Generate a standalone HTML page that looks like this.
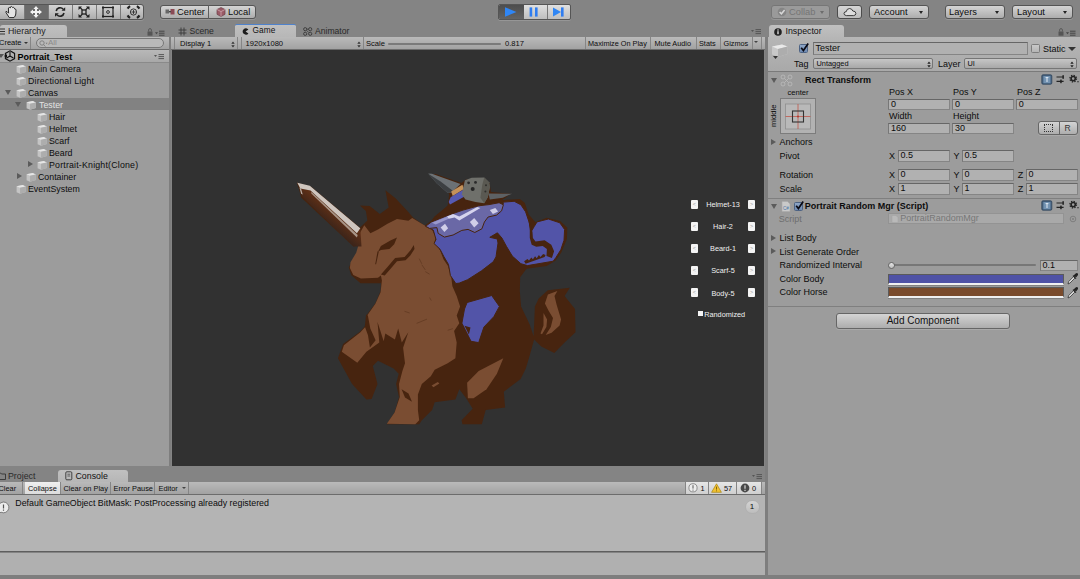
<!DOCTYPE html>
<html><head><meta charset="utf-8">
<style>
*{box-sizing:border-box;margin:0;padding:0}
html,body{width:1080px;height:579px;overflow:hidden;background:#a1a1a1;font-family:"Liberation Sans",sans-serif;font-size:9px;color:#0c0c0c}
#hier .t{font-size:8.8px}
.abs{position:absolute}
#root{position:relative;width:1080px;height:579px;overflow:hidden;background:#7e7e7e}
.t{position:absolute;white-space:nowrap;line-height:12px;height:12px}
.b{font-weight:700}
.btn{position:absolute;border:1px solid #555;border-radius:3px;background:linear-gradient(#d4d4d4,#adadad);box-shadow:0 1px 0 rgba(255,255,255,.15)}
.tab{position:absolute;height:13px;background:linear-gradient(#c0c0c0,#b6b6b6);border-radius:3px 3px 0 0}
.tbar{position:absolute;height:13px;background:linear-gradient(#bababa,#a2a2a2);border-bottom:1px solid #6c6c6c}
.fld{position:absolute;height:11px;background:#b1b1b1;border:1px solid #858585;border-top-color:#666;border-left-color:#777;font-size:9px;line-height:9.8px;padding-left:2px;white-space:nowrap;overflow:hidden}
.dd{position:absolute;height:11px;background:linear-gradient(#c6c6c6,#a8a8a8);border:1px solid #767676;border-radius:2px;font-size:7.4px;line-height:9.5px;padding-left:3px;white-space:nowrap}
.sep{position:absolute;width:1px;background:#858585}
.tri-r{position:absolute;width:0;height:0;border-left:5px solid #5b5b5b;border-top:3.5px solid transparent;border-bottom:3.5px solid transparent}
.tri-d{position:absolute;width:0;height:0;border-top:5px solid #5b5b5b;border-left:3.5px solid transparent;border-right:3.5px solid transparent}
.cube{position:absolute;width:10.5px;height:10px}
</style></head><body>
<div id="root">
<!-- TOP TOOLBAR -->
<div id="top" class="abs" style="left:0;top:0;width:1080px;height:37px;background:#848484">
<!-- tool buttons -->
<div class="btn" style="left:-3px;top:3.5px;width:147px;height:16px;overflow:hidden">
 <div class="abs" style="left:26px;top:0;width:24px;height:16px;background:#6b6b6b"></div>
 <div class="sep" style="left:26px;top:0;height:16px;background:#7a7a7a"></div>
 <div class="sep" style="left:50px;top:0;height:16px;background:#7a7a7a"></div>
 <div class="sep" style="left:74px;top:0;height:16px;background:#7a7a7a"></div>
 <div class="sep" style="left:98px;top:0;height:16px;background:#7a7a7a"></div>
 <div class="sep" style="left:122px;top:0;height:16px;background:#7a7a7a"></div>
 <svg class="abs" style="left:0;top:-0.5px" width="147" height="15" viewBox="0 0 147 15">
  <!-- hand -->
  <g fill="none" stroke="#2a2a2a" stroke-width="1" stroke-linejoin="round" stroke-linecap="round">
   <path d="M11 13.2 L8 8.6 Q7.4 7 9 7.6 L10.6 9.2 L10.4 4 Q11.3 2.8 12.2 4 L12.5 2.9 Q13.5 1.9 14.4 3.1 L14.7 3.6 Q15.7 2.9 16.4 4.1 L16.6 4.9 Q17.8 4.6 18 6.1 L17.8 10 Q17.5 12.2 16 13.6 L11.6 13.6 Z" fill="#e4e4e4"/>
  </g>
  <!-- move -->
  <g fill="#f2f2f2" stroke="none">
   <path d="M38 2 L40.6 5 L39 5 L39 7 L41 7 L41 5.4 L44 8 L41 10.6 L41 9 L39 9 L39 11 L40.6 11 L38 14 L35.4 11 L37 11 L37 9 L35 9 L35 10.6 L32 8 L35 5.4 L35 7 L37 7 L37 5 L35.4 5 Z"/>
  </g>
  <!-- rotate -->
  <g fill="none" stroke="#222" stroke-width="1.6">
   <path d="M58.2 7 A4 4 0 0 1 65.2 5.2"/>
   <path d="M66 9 A4 4 0 0 1 59 10.8"/>
  </g>
  <path d="M63.5 6.8 L67.2 6.8 L67.2 3.2 Z" fill="#222"/>
  <path d="M60.8 9.2 L57 9.2 L57 12.8 Z" fill="#222"/>
  <!-- scale -->
  <g fill="#222">
   <rect x="84" y="6" width="4" height="4" fill="none" stroke="#222" stroke-width="1.3"/>
   <path d="M80.5 2.5 L84 2.5 L83 3.6 L84.8 5.4 L83.9 6.3 L82.1 4.5 L80.5 6 Z"/>
   <path d="M91.5 2.5 L88 2.5 L89 3.6 L87.2 5.4 L88.1 6.3 L89.9 4.5 L91.5 6 Z"/>
   <path d="M80.5 13.5 L84 13.5 L83 12.4 L84.8 10.6 L83.9 9.7 L82.1 11.5 L80.5 10 Z"/>
   <path d="M91.5 13.5 L88 13.5 L89 12.4 L87.2 10.6 L88.1 9.7 L89.9 11.5 L91.5 10 Z"/>
  </g>
  <!-- rect -->
  <g>
   <rect x="105" y="3.5" width="10" height="9" fill="none" stroke="#222" stroke-width="1.2"/>
   <circle cx="110" cy="8" r="1.4" fill="none" stroke="#222" stroke-width="0.9"/>
   <rect x="104" y="2.5" width="2" height="2" fill="#222"/><rect x="114" y="2.5" width="2" height="2" fill="#222"/>
   <rect x="104" y="11.5" width="2" height="2" fill="#222"/><rect x="114" y="11.5" width="2" height="2" fill="#222"/>
  </g>
  <!-- transform -->
  <g fill="none" stroke="#222">
   <circle cx="135.5" cy="8" r="3.1" stroke-width="0.9"/>
   <path d="M135.5 6 V10 M133.5 8 H137.5" stroke-width="0.8"/>
   <path d="M129.6 4.6 A6.8 6.8 0 0 1 132.1 2.1 M138.9 2.1 A6.8 6.8 0 0 1 141.4 4.6 M141.4 11.4 A6.8 6.8 0 0 1 138.9 13.9 M132.1 13.9 A6.8 6.8 0 0 1 129.6 11.4" stroke-width="2.2"/>
  </g>
 </svg>
</div>
<!-- center/local -->
<div class="btn" style="left:160px;top:5px;width:96px;height:14px"></div>
<div class="sep" style="left:208px;top:5px;height:14px;background:#5e5e5e"></div>
<svg class="abs" style="left:165px;top:8px" width="10" height="8" viewBox="0 0 10 8"><rect x="0.5" y="1.5" width="3.5" height="4" fill="#666"/><rect x="5.5" y="1" width="4" height="5.5" fill="#8a4a55"/><rect x="4" y="3" width="2" height="1.4" fill="#444"/></svg>
<div class="t" style="left:177px;top:6px;font-size:9.3px">Center</div>
<svg class="abs" style="left:216px;top:7px" width="10" height="10" viewBox="0 0 10 10"><path d="M5 0.5 L9 2.5 L9 7.3 L5 9.5 L1 7.3 L1 2.5 Z" fill="#9a5a66" stroke="#6a3f49" stroke-width="0.7"/><path d="M1 2.5 L5 4.6 L9 2.5 M5 4.6 V9.5" stroke="#d6b0b8" stroke-width="0.7" fill="none"/></svg>
<div class="t" style="left:228px;top:6px;font-size:9.3px">Local</div>
<!-- play -->
<div class="btn" style="left:498px;top:4px;width:73px;height:16px;border-color:#555;border-radius:2px;overflow:hidden;background:linear-gradient(#e0e0e0,#bebebe)">
 <div class="abs" style="left:0;top:0;width:25px;height:16px;background:linear-gradient(#4d4d4d,#666)"></div>
 <div class="sep" style="left:48px;top:0;height:16px;background:#777"></div>
 <svg class="abs" style="left:-1px;top:-1px" width="73" height="16" viewBox="0 0 73 16">
  <path d="M7 3.2 L18.5 8 L7 12.8 Z" fill="#2f86f5"/>
  <rect x="31.6" y="3.4" width="2.6" height="9.2" fill="#2f7df0"/><rect x="37" y="3.4" width="2.6" height="9.2" fill="#2f7df0"/>
  <path d="M55 3.4 L63 8 L55 12.6 Z" fill="#2f86f5"/><rect x="63" y="3.4" width="2.6" height="9.2" fill="#2f7df0"/>
 </svg>
</div>
<!-- right buttons -->
<div class="btn" style="left:771px;top:5px;width:59px;height:14px;background:#9a9a9a;border-color:#767676"></div>
<svg class="abs" style="left:777px;top:7px" width="10" height="10" viewBox="0 0 10 10"><circle cx="5" cy="5" r="4.3" fill="#858585"/><path d="M2.6 5 L4.4 6.8 L7.6 3" stroke="#d8d8d8" stroke-width="1.5" fill="none"/></svg>
<div class="t" style="left:789px;top:6px;font-size:9.3px;color:#757575">Collab</div>
<div class="abs" style="left:820px;top:11px;width:0;height:0;border-top:3px solid #6d6d6d;border-left:2.5px solid transparent;border-right:2.5px solid transparent"></div>
<div class="btn" style="left:837px;top:5px;width:25px;height:14px;border-color:#4c4c4c;background:linear-gradient(#d5d5d5,#bdbdbd)"></div>
<svg class="abs" style="left:843px;top:7px" width="14" height="10" viewBox="0 0 14 10"><path d="M3.4 8.6 Q0.8 8.4 1 6.3 Q1.3 4.6 3.2 4.7 Q3.6 1.6 6.6 1.5 Q9 1.6 9.8 4 Q12.8 4 12.9 6.4 Q12.8 8.5 10.6 8.6 Z" fill="#ddd" stroke="#2c2c2c" stroke-width="0.9"/></svg>
<div class="btn" style="left:869px;top:5px;width:60px;height:14px"></div>
<div class="t" style="left:874px;top:6px;font-size:9.3px">Account</div>
<div class="abs" style="left:919px;top:11px;width:0;height:0;border-top:3px solid #222;border-left:2.5px solid transparent;border-right:2.5px solid transparent"></div>
<div class="btn" style="left:945px;top:5px;width:60px;height:14px"></div>
<div class="t" style="left:949px;top:6px;font-size:9.3px">Layers</div>
<div class="abs" style="left:995px;top:11px;width:0;height:0;border-top:3px solid #222;border-left:2.5px solid transparent;border-right:2.5px solid transparent"></div>
<div class="btn" style="left:1012px;top:5px;width:61px;height:14px"></div>
<div class="t" style="left:1017px;top:6px;font-size:9.3px">Layout</div>
<div class="abs" style="left:1063px;top:11px;width:0;height:0;border-top:3px solid #222;border-left:2.5px solid transparent;border-right:2.5px solid transparent"></div>
</div>
<!-- HIERARCHY -->
<div id="hier" class="abs" style="left:0;top:25px;width:169px;height:441px;background:linear-gradient(#848484 12px,#9c9c9c 12px)">
<div class="tab" style="left:0;top:0;width:67px"></div>
<svg class="abs" style="left:0;top:3px" width="6" height="7" viewBox="0 0 6 7"><path d="M0 1 H5 M0 3.5 H5 M0 6 H5" stroke="#333" stroke-width="1"/></svg><div class="t" style="left:8px;top:0px;font-size:8.8px;color:#222">Hierarchy</div>
<svg class="abs" style="left:147px;top:2px" width="20" height="10" viewBox="0 0 20 10"><rect x="0.5" y="4.5" width="5" height="4.2" fill="#555"/><path d="M1.6 4.5 V3 A1.4 1.4 0 0 1 4.4 3 V4.5" stroke="#555" stroke-width="0.9" fill="none"/><path d="M8 5.2 L11 5.2 L9.5 7.2 Z" fill="#444"/><path d="M12 4.2 H17.5 M12 6.2 H17.5 M12 8.2 H17.5" stroke="#444" stroke-width="1"/></svg>
<div class="tbar" style="left:0;top:12px;width:169px"></div>
<div class="t" style="left:-1px;top:12px;font-size:7.5px">Create</div>
<div class="abs" style="left:24px;top:17px;width:0;height:0;border-top:2.5px solid #333;border-left:2px solid transparent;border-right:2px solid transparent"></div>
<div class="sep" style="left:30px;top:12px;height:12px"></div>
<div class="abs" style="left:36px;top:13px;width:128px;height:10px;border:1px solid #777;border-radius:5px;background:#b9b9b9"></div>
<svg class="abs" style="left:39px;top:14.5px" width="9" height="8" viewBox="0 0 9 8"><circle cx="3" cy="3" r="2.2" fill="none" stroke="#7a7a7a" stroke-width="0.9"/><path d="M4.6 4.6 L6.4 6.6" stroke="#7a7a7a" stroke-width="0.9"/><path d="M6.6 2.8 L8.6 2.8 L7.6 4.2Z" fill="#7a7a7a"/></svg><div class="t" style="left:48px;top:12px;font-size:8px;color:#8a8a8a">All</div>
<div class="abs" style="left:0;top:25px;width:169px;height:13px;background:linear-gradient(#b8b8b8,#a8a8a8);border-bottom:1px solid #8a8a8a"></div>
<div class="abs" style="left:-2px;top:29px;width:0;height:0;border-top:4px solid #555;border-left:3px solid transparent;border-right:3px solid transparent"></div>
<svg class="abs" style="left:4px;top:25px" width="12" height="12" viewBox="0 0 12 12"><path d="M6 0.8 L10.6 3.4 L10.6 8.6 L6 11.2 L1.4 8.6 L1.4 3.4 Z" fill="none" stroke="#111" stroke-width="1.1"/><path d="M6 6 L6 2 M6 6 L9.4 8 M6 6 L2.6 8" stroke="#111" stroke-width="1.1"/><path d="M0 6 L3 4.2 L3 7.8Z" fill="#111"/></svg>
<div class="t b" style="left:17.5px;top:25.5px;font-size:9px;color:#000">Portrait_Test</div>
<svg class="abs" style="left:154px;top:29px" width="12" height="6" viewBox="0 0 12 6"><path d="M0 1 L3 1 L1.5 3 Z" fill="#555"/><path d="M4.5 0.6 H10 M4.5 2.6 H10 M4.5 4.6 H10" stroke="#555" stroke-width="1"/></svg>
<svg class="cube" style="left:16px;top:38.8px" viewBox="0 0 9 9"><path d="M0.3 2 L5.8 1 L8.6 2.2 L8.6 7.2 L3.4 8.8 L0.3 7.4 Z" fill="#c4c4c4"/><path d="M0.3 2 L5.8 1 L8.6 2.2 L3.4 3.4 Z" fill="#e6e6e6"/><path d="M3.4 3.4 L8.6 2.2 L8.6 7.2 L3.4 8.8 Z" fill="#adadad"/></svg>
<div class="t" style="left:28px;top:37.8px;color:#0c0c0c">Main Camera</div>
<svg class="cube" style="left:16px;top:50.8px" viewBox="0 0 9 9"><path d="M0.3 2 L5.8 1 L8.6 2.2 L8.6 7.2 L3.4 8.8 L0.3 7.4 Z" fill="#c4c4c4"/><path d="M0.3 2 L5.8 1 L8.6 2.2 L3.4 3.4 Z" fill="#e6e6e6"/><path d="M3.4 3.4 L8.6 2.2 L8.6 7.2 L3.4 8.8 Z" fill="#adadad"/></svg>
<div class="t" style="left:28px;top:49.8px;color:#0c0c0c;letter-spacing:0.18px">Directional Light</div>
<div class="tri-d" style="left:5px;top:65.1px"></div>
<svg class="cube" style="left:16px;top:62.8px" viewBox="0 0 9 9"><path d="M0.3 2 L5.8 1 L8.6 2.2 L8.6 7.2 L3.4 8.8 L0.3 7.4 Z" fill="#c4c4c4"/><path d="M0.3 2 L5.8 1 L8.6 2.2 L3.4 3.4 Z" fill="#e6e6e6"/><path d="M3.4 3.4 L8.6 2.2 L8.6 7.2 L3.4 8.8 Z" fill="#adadad"/></svg>
<div class="t" style="left:28px;top:61.8px;color:#0c0c0c">Canvas</div>
<div class="abs" style="left:0;top:73px;width:169px;height:12px;background:#828282"></div>
<div class="tri-d" style="left:15px;top:77.1px"></div>
<svg class="cube" style="left:26px;top:74.8px" viewBox="0 0 9 9"><path d="M0.3 2 L5.8 1 L8.6 2.2 L8.6 7.2 L3.4 8.8 L0.3 7.4 Z" fill="#c4c4c4"/><path d="M0.3 2 L5.8 1 L8.6 2.2 L3.4 3.4 Z" fill="#e6e6e6"/><path d="M3.4 3.4 L8.6 2.2 L8.6 7.2 L3.4 8.8 Z" fill="#adadad"/></svg>
<div class="t" style="left:39px;top:73.8px;color:#e4e4e4">Tester</div>
<svg class="cube" style="left:37px;top:86.8px" viewBox="0 0 9 9"><path d="M0.3 2 L5.8 1 L8.6 2.2 L8.6 7.2 L3.4 8.8 L0.3 7.4 Z" fill="#c4c4c4"/><path d="M0.3 2 L5.8 1 L8.6 2.2 L3.4 3.4 Z" fill="#e6e6e6"/><path d="M3.4 3.4 L8.6 2.2 L8.6 7.2 L3.4 8.8 Z" fill="#adadad"/></svg>
<div class="t" style="left:49px;top:85.8px;color:#0c0c0c">Hair</div>
<svg class="cube" style="left:37px;top:98.8px" viewBox="0 0 9 9"><path d="M0.3 2 L5.8 1 L8.6 2.2 L8.6 7.2 L3.4 8.8 L0.3 7.4 Z" fill="#c4c4c4"/><path d="M0.3 2 L5.8 1 L8.6 2.2 L3.4 3.4 Z" fill="#e6e6e6"/><path d="M3.4 3.4 L8.6 2.2 L8.6 7.2 L3.4 8.8 Z" fill="#adadad"/></svg>
<div class="t" style="left:49px;top:97.8px;color:#0c0c0c">Helmet</div>
<svg class="cube" style="left:37px;top:110.8px" viewBox="0 0 9 9"><path d="M0.3 2 L5.8 1 L8.6 2.2 L8.6 7.2 L3.4 8.8 L0.3 7.4 Z" fill="#c4c4c4"/><path d="M0.3 2 L5.8 1 L8.6 2.2 L3.4 3.4 Z" fill="#e6e6e6"/><path d="M3.4 3.4 L8.6 2.2 L8.6 7.2 L3.4 8.8 Z" fill="#adadad"/></svg>
<div class="t" style="left:49px;top:109.8px;color:#0c0c0c">Scarf</div>
<svg class="cube" style="left:37px;top:122.8px" viewBox="0 0 9 9"><path d="M0.3 2 L5.8 1 L8.6 2.2 L8.6 7.2 L3.4 8.8 L0.3 7.4 Z" fill="#c4c4c4"/><path d="M0.3 2 L5.8 1 L8.6 2.2 L3.4 3.4 Z" fill="#e6e6e6"/><path d="M3.4 3.4 L8.6 2.2 L8.6 7.2 L3.4 8.8 Z" fill="#adadad"/></svg>
<div class="t" style="left:49px;top:121.8px;color:#0c0c0c">Beard</div>
<div class="tri-r" style="left:28px;top:136.1px"></div>
<svg class="cube" style="left:37px;top:134.8px" viewBox="0 0 9 9"><path d="M0.3 2 L5.8 1 L8.6 2.2 L8.6 7.2 L3.4 8.8 L0.3 7.4 Z" fill="#c4c4c4"/><path d="M0.3 2 L5.8 1 L8.6 2.2 L3.4 3.4 Z" fill="#e6e6e6"/><path d="M3.4 3.4 L8.6 2.2 L8.6 7.2 L3.4 8.8 Z" fill="#adadad"/></svg>
<div class="t" style="left:49px;top:133.8px;color:#0c0c0c;letter-spacing:0.19px">Portrait-Knight(Clone)</div>
<div class="tri-r" style="left:17px;top:148.1px"></div>
<svg class="cube" style="left:26px;top:146.8px" viewBox="0 0 9 9"><path d="M0.3 2 L5.8 1 L8.6 2.2 L8.6 7.2 L3.4 8.8 L0.3 7.4 Z" fill="#c4c4c4"/><path d="M0.3 2 L5.8 1 L8.6 2.2 L3.4 3.4 Z" fill="#e6e6e6"/><path d="M3.4 3.4 L8.6 2.2 L8.6 7.2 L3.4 8.8 Z" fill="#adadad"/></svg>
<div class="t" style="left:38px;top:145.8px;color:#0c0c0c">Container</div>
<svg class="cube" style="left:16px;top:158.8px" viewBox="0 0 9 9"><path d="M0.3 2 L5.8 1 L8.6 2.2 L8.6 7.2 L3.4 8.8 L0.3 7.4 Z" fill="#c4c4c4"/><path d="M0.3 2 L5.8 1 L8.6 2.2 L3.4 3.4 Z" fill="#e6e6e6"/><path d="M3.4 3.4 L8.6 2.2 L8.6 7.2 L3.4 8.8 Z" fill="#adadad"/></svg>
<div class="t" style="left:28px;top:157.8px;color:#0c0c0c">EventSystem</div>
</div>
<!-- GAME -->
<div id="gamep" class="abs" style="left:171px;top:25px;width:594px;height:441px;background:#848484">
<div class="tab" style="left:64px;top:-1px;height:14px;width:61px;border-top:1.5px solid #4f82cc;border-radius:2px 2px 0 0"></div>
<svg class="abs" style="left:7px;top:2px" width="9" height="9" viewBox="0 0 9 9"><path d="M3 0.5 V8.5 M6 0.5 V8.5 M0.5 3 H8.5 M0.5 6 H8.5" stroke="#3a3a3a" stroke-width="0.9"/></svg>
<div class="t" style="left:18.5px;top:0;font-size:8.6px;color:#2a2a2a">Scene</div>
<svg class="abs" style="left:71px;top:3px" width="7" height="7" viewBox="0 0 7 7"><path d="M6.4 1.6 A3.2 3.2 0 1 0 6.4 5.4 L3.6 3.5 Z" fill="#1c1c1c"/></svg>
<div class="t" style="left:81.5px;top:-0.7px;font-size:8.3px;letter-spacing:0.1px;color:#111">Game</div>
<svg class="abs" style="left:132px;top:2px" width="10" height="9" viewBox="0 0 10 9"><circle cx="2.2" cy="2.2" r="1.6" fill="none" stroke="#3a3a3a" stroke-width="0.9"/><circle cx="7.2" cy="2.2" r="1.6" fill="none" stroke="#3a3a3a" stroke-width="0.9"/><circle cx="2.2" cy="6.8" r="1.6" fill="none" stroke="#3a3a3a" stroke-width="0.9"/><circle cx="7.2" cy="6.8" r="1.6" fill="none" stroke="#3a3a3a" stroke-width="0.9"/><path d="M3.6 3.4 L5.8 5.6 M3.8 2.2 H5.6" stroke="#3a3a3a" stroke-width="0.8"/></svg>
<div class="t" style="left:144px;top:0;font-size:8.6px;color:#2a2a2a">Animator</div>
<svg class="abs" style="left:580px;top:4px" width="12" height="6" viewBox="0 0 12 6"><path d="M0 1 L3 1 L1.5 3 Z" fill="#555"/><path d="M4.5 0.6 H10 M4.5 2.6 H10 M4.5 4.6 H10" stroke="#555" stroke-width="1"/></svg>
<div class="tbar" style="left:0;top:12px;width:594px"></div>
<div class="sep" style="left:3px;top:12px;height:12px"></div>
<div class="t" style="left:9px;top:12.6px;font-size:7.6px;">Display 1</div>
<svg class="abs" style="left:59.5px;top:15.5px" width="4" height="7" viewBox="0 0 4 7"><path d="M0.3 2.8 L2 0.6 L3.7 2.8 Z M0.3 4.2 L2 6.4 L3.7 4.2 Z" fill="#333"/></svg>
<div class="sep" style="left:65.5px;top:12px;height:12px"></div>
<div class="sep" style="left:69.5px;top:12px;height:12px"></div>
<div class="t" style="left:74.5px;top:12.6px;font-size:7.6px;">1920x1080</div>
<svg class="abs" style="left:186px;top:15.5px" width="4" height="7" viewBox="0 0 4 7"><path d="M0.3 2.8 L2 0.6 L3.7 2.8 Z M0.3 4.2 L2 6.4 L3.7 4.2 Z" fill="#333"/></svg>
<div class="sep" style="left:191.5px;top:12px;height:12px"></div>
<div class="t" style="left:195px;top:12.6px;font-size:7.6px;">Scale</div>
<div class="abs" style="left:216.5px;top:17.5px;width:113px;height:2px;background:#7a7a7a;border-radius:1px"></div>
<div class="t" style="left:334px;top:12.6px;font-size:7.6px;">0.817</div>
<div class="sep" style="left:414px;top:12px;height:12px"></div>
<div class="t" style="left:417px;top:12.6px;font-size:7.3px;">Maximize On Play</div>
<div class="sep" style="left:479px;top:12px;height:12px"></div>
<div class="t" style="left:483.5px;top:12.6px;font-size:7.3px;">Mute Audio</div>
<div class="sep" style="left:525px;top:12px;height:12px"></div>
<div class="t" style="left:528px;top:12.6px;font-size:7.3px;">Stats</div>
<div class="sep" style="left:548.5px;top:12px;height:12px"></div>
<div class="t" style="left:552.5px;top:12.6px;font-size:7.3px;">Gizmos</div>
<div class="sep" style="left:580.5px;top:12px;height:12px"></div>
<div class="sep" style="left:589.5px;top:12px;height:12px"></div>
<div class="abs" style="left:583px;top:16px;width:0;height:0;border-top:2.5px solid #444;border-left:2px solid transparent;border-right:2px solid transparent"></div>
<div id="game" class="abs" style="left:1px;top:24.5px;width:592px;height:416px;background:#313131;overflow:hidden">
<!--KNIGHT-->
<svg class="abs" style="left:0;top:0" width="592" height="416" viewBox="172 49.5 592 416">
<defs><linearGradient id="swg" gradientUnits="userSpaceOnUse" x1="334.1" y1="211.8" x2="325.3" y2="222.3"><stop offset="0" stop-color="#5e2f16"/><stop offset="1" stop-color="#3a241a"/></linearGradient></defs>
<polygon fill="#47240f" points="296.7,182 311.3,186.3 360,226.9 367.4,220.1 365.9,210.5 360,204.9 369.7,205.6 379.8,213.4 388.7,207.1 385.4,189.8 395.5,197.7 406.7,209.8 413.4,217.2 424.6,225.1 431.1,220.6 434.5,216.1 448,204.9 449.1,193.7 446.8,189.2 430,173.9 435.6,173.5 461.4,182.4 465.9,179.1 482.7,177.5 489.5,182.4 491,191.4 510.8,193.2 504.1,198.2 497.3,200.8 506.3,199.3 519.8,198.6 524.7,202.2 528.7,213.9 535.5,221.7 546.7,217.2 560.2,220.6 567.3,227.3 566.9,238.5 561.3,252 555.7,259.9 546.7,265.5 526.5,268.2 520.2,276.7 519.8,289.9 519.8,290.4 521.1,305.9 529.7,324 533.6,335.7 534.9,305.9 538.7,298.1 547.8,289.8 569.8,287.2 564.6,295.5 575,308.5 575.5,331.8 564.6,342.1 554.3,352.5 541.3,346 534.1,339 529.7,355.1 525.8,368 520.6,378.4 503.8,391.3 505.1,406.9 485.7,409.4 481.8,423.7 462.4,423.7 461.6,419.8 472.7,408.2 466.2,397.8 459.3,388.7 455.4,399.1 434.7,401.7 432.1,409.4 421.8,419.8 419.2,423.7 386.8,423.7 394.6,412 399,396.5 396.1,383.6 398.7,373.2 393.6,368 378,360.3 372.8,365.4 377.5,383.6 371.6,398.6 366.4,399.1 352.1,383.6 337.9,357.7 343.1,343.4 359.9,331.3 366.4,324 367.2,313.7 375.4,302.8 380.6,290.4 381.1,280 381.9,288.3 381.3,282.5 360.5,282.8 351.3,274.8 348.8,266.9 351.7,261 359.6,254.3 360.7,243 357.3,237.4 354,246.4 301.2,197 299,188.7"/>
<polygon fill="#7a4d32" points="364.3,224.7 370.4,232.7 378,228.9 387.5,223.2 397,218.4 408.4,220.3 412.2,217.5 425.6,225.6 430,225.1 435.6,236.3 434.5,241.9 440.1,249.8 443.5,258.7 448,265.5 451.3,276.7 452.4,285.7 456.7,295.5 460.1,305.9 456.7,315 459.3,322.7 454.1,330.5 456.7,342.1 455.4,357.7 447.7,362.8 434.7,369.3 430.8,375.8 421.8,383.6 417.9,393.9 417.9,409.4 419.2,419.8 415.3,423.7 386.8,423.2 394.6,412 399.8,396.5 399,383.6 402.4,370.6 405,362.8 403.1,347.3 408.3,331.8 401.8,342.1 398.2,327.9 394.9,339 385.3,333.1 383.7,340.8 377.5,321.4 379.3,342.1 366.4,351.2 357.3,362.3 341.8,351.2 343.9,344.7 360.4,331.8 366.4,325.3 367.7,314.2 375.4,303.3 380.6,291.7 381.9,280 380.9,275.1 378,277.3 360.9,277.9 353.3,274.5 349.9,267.5 350.5,261.7 356.2,252.2 359,242.7 360,232.3"/>
<polygon fill="#7a4d32" points="467.1,382.3 478.7,370.6 503.3,357.7 496.9,373.2 486.5,388.7 473.6,397.8 467.9,397.8"/>
<polygon fill="#7a4d32" points="547.9,294.1 557.4,290.4 554.5,295.5 556.7,304.4 561.1,319 559.6,324.9 551.6,332.2 545.7,334.4 550.8,326.4 553,317.6 548.6,310.2 544.9,302.9"/>
<polygon fill="#7a4d32" points="543.5,312.4 547.1,319 546.4,326.4 542,333.7 540.5,333 543.5,324.9"/>
<polygon fill="#7a4d32" points="431.6,384.9 437.8,381.5 439.4,383 433.4,386.7"/>
<polygon fill="#47240f" points="380.9,274.1 387.5,266.5 395.1,257.6 404.6,256.6 410.7,249.4 413.8,244.6 414.5,248.4 410.3,255.1 405.6,259.8 397,260.8 390.4,268.4 384.7,275.1"/>
<polygon fill="#47240f" points="378,251.3 380.9,245.6 390.4,239.9 397,237 394.2,243.7 389.4,248.4 380.9,249.4"/>
<polygon fill="#47240f" points="377.6,250.7 378.8,251.1 376.1,263.7 375.2,263.7"/>
<polygon fill="#47240f" points="401.6,388.7 408.5,393 412,401.2 405,397"/>
<polygon fill="#47240f" points="366.1,313.8 368,315.7 370.3,328 375.6,339.8 369.9,347 368,334.7 364.8,326.1"/>
<polygon fill="#5254a8" stroke="#47240f" stroke-width="1" stroke-linejoin="round" points="433.3,229.6 436,239 434,243 440,248.7 443.8,256 448.5,264 450.4,275 455.8,283 459.3,282.6 467.6,279.2 481.5,270.3 493.2,261.3 496,256.4 498,242.6 497.3,238.5 489.8,236.8 497.4,232.3 501.9,237.5 506.6,246.1 512.3,255.6 520.9,263.2 527.5,265.1 553.2,260.7 556,256.9 560.8,249.3 564,239.8 564.6,229 559.8,222.3 548.4,218.5 537,221.4 534.2,226.1 531.3,230.9 529,221.4 525.6,211.3 520.9,204.3 514.2,200.8 500.9,201.8 475.1,205.9 448.5,213.5 431.4,222 425.7,225.8"/>
<polygon fill="#47240f" points="528.7,220.4 530.6,223.3 532.5,231.8 532.9,237.5 535.5,241 544.6,239.8 551.3,244.2 554.1,250.8 551.9,257.5 546.5,255.6 546.9,248.6 542.7,245.5 536.3,246.3 531.7,244.2 529.8,237.5 529.8,229.9"/>
<polygon fill="#47240f" points="524.1,260.7 527.5,258.4 529,260 531.3,256.9 532.9,258.8 535.1,255.8 536.7,257.7 538.9,254.6 540.5,256.5 543.1,253.5 545.6,254.6 544.6,256.5 525.6,263.2"/>
<polygon fill="#5254a8" stroke="#47240f" stroke-width="1" stroke-linejoin="round" points="467.1,302 491.7,295 499.4,305.9 493.8,316.2 483.9,326.6 478.7,342.1 471,340.8 461.9,322.7 464.5,308.5"/>
<polygon fill="#47240f" points="464.5,325.3 470.5,327.1 468.9,333.9"/>
<polygon fill="#47240f" points="447.5,205.3 450,196.6 465.5,199.7 475.5,204.1 484.2,204.1 491.6,200.6 502.8,198.8 504,204.1 477.9,206.5 463,209.6 446.9,215.9 436.9,220.2 434.4,217.7"/>
<polygon fill="#6a68a6" stroke="#47240f" stroke-width="1" stroke-linejoin="round" points="425.7,225.8 431.3,221.5 446.9,215.2 463,209.6 478.6,205.3 489.1,204.1 499.1,202.2 503.4,204.3 501.6,210.3 496.6,214.6 488.1,216.5 484.4,221.5 481.9,228.3 474.8,232 468,228.9 461.8,229.9 453.1,234.5 444.4,236.6 438.2,232.9 436.9,227.1 429.5,227.9"/>
<polygon fill="#9a98cc" points="431.9,222.2 446.9,216.2 448.7,218.3 435.7,223.9"/>
<polygon fill="#d6d4ee" points="446.9,215.9 453.1,213.4 459.3,215.9 477.3,206.5 480.4,207.5 459.3,220 454.6,217.1 448.7,218.3"/>
<polygon fill="#d0cee8" points="440.6,227.1 445,223.3 448.1,227.7 444.4,231.6"/>
<polygon fill="#d0cee8" points="469.9,221.5 474.2,217.5 478.6,222.7 474.2,227.1"/>
<polygon fill="#d0cee8" points="489.8,209.6 495.3,207.5 498.1,210.9 492.9,213.4"/>
<polygon fill="#6c7175" points="428.2,173 431.9,173.2 460.5,183.5 451.2,192.2 447.5,192.2 436.9,182.9"/>
<polygon fill="#3c3f42" points="428.2,173.2 436.9,182.9 447.5,192.2 451.2,192.2 453.1,190.4 440.6,181.1"/>
<polygon fill="#5d6164" points="488.5,192.9 512,193.2 502.8,197.2 489.8,199.1"/>
<polygon fill="#c4925a" points="451.2,191 462.4,184.2 464,188.5 452.7,195.6"/>
<polygon fill="#565ab2" points="450.6,196.8 462.8,189.4 464.5,196 450,204.1 448.7,201.6"/>
<polygon fill="#6f706b" points="464.9,179.8 471.7,177.3 484.2,177 489.1,181.7 489.8,186.6 487.9,196.6 484.2,202.8 475.5,201.6 465.5,199.1 461.8,194.1 463.6,185.4"/>
<polygon fill="#5a5952" points="484.2,177 489.1,181.7 489.8,186.6 487.9,196.6 484.2,202.8 480.4,197.2 482.3,184.2"/>
<polygon fill="url(#swg)" points="300.3,187.9 310.5,190.1 356.9,232.7 360.3,227.8 361.5,246 353.9,246 302.2,195.9"/>
<polygon fill="#cfc6bf" points="297.3,182.2 309.8,185.2 360.3,227.8 356.9,232.7 310.5,190.1 300.3,187.9"/>
<polygon fill="#b9aca3" points="299.4,187 301,187.9 302.8,194.3 301,192.8"/>
<polygon fill="#a89486" points="311.3,191.3 357.7,234.6 356.9,236.9 311.3,193.1"/>
<line x1="419.2" y1="258.1" x2="421.8" y2="263.3" stroke="#47240f" stroke-opacity="0.55" stroke-width="0.7"/>
<line x1="421.8" y1="264.2" x2="425.3" y2="269.4" stroke="#47240f" stroke-opacity="0.55" stroke-width="0.7"/>
<line x1="425.3" y1="271.1" x2="429.6" y2="273.7" stroke="#47240f" stroke-opacity="0.55" stroke-width="0.7"/>
<line x1="404.5" y1="310.8" x2="409.7" y2="312.5" stroke="#47240f" stroke-opacity="0.55" stroke-width="0.7"/>
<line x1="416.6" y1="322.9" x2="427" y2="318.6" stroke="#47240f" stroke-opacity="0.55" stroke-width="0.7"/>
<line x1="447.7" y1="329.8" x2="452.9" y2="328.1" stroke="#47240f" stroke-opacity="0.55" stroke-width="0.7"/>
<line x1="429.6" y1="297" x2="431.3" y2="300.1" stroke="#47240f" stroke-opacity="0.55" stroke-width="0.7"/>
<circle fill="#2a2a2a" cx="468.6" cy="182.3" r="1.4"/>
<circle fill="#2a2a2a" cx="475.5" cy="181.9" r="1.4"/>
<circle fill="#262626" cx="472.7" cy="188.5" r="2"/>
<circle fill="#302f2c" cx="486" cy="184.8" r="1"/>
<circle fill="#302f2c" cx="485.4" cy="191" r="1"/>
</svg>
<!--GUI-->
<div class="abs" style="left:518.8px;top:150.4px;width:7.2px;height:8.8px;background:#f4f4f4;border-radius:1px;color:#9a9a9a;font-size:5.5px;line-height:8.8px;text-align:center">&lt;</div>
<div class="abs" style="left:576.1px;top:150.4px;width:7.2px;height:8.8px;background:#f4f4f4;border-radius:1px;color:#9a9a9a;font-size:5.5px;line-height:8.8px;text-align:center">&gt;</div>
<div class="t" style="left:521px;top:149.6px;width:60px;text-align:center;font-size:7.3px;color:#f0f0f0">Helmet-13</div>
<div class="abs" style="left:518.8px;top:172.5px;width:7.2px;height:8.8px;background:#f4f4f4;border-radius:1px;color:#9a9a9a;font-size:5.5px;line-height:8.8px;text-align:center">&lt;</div>
<div class="abs" style="left:576.1px;top:172.5px;width:7.2px;height:8.8px;background:#f4f4f4;border-radius:1px;color:#9a9a9a;font-size:5.5px;line-height:8.8px;text-align:center">&gt;</div>
<div class="t" style="left:521px;top:171.7px;width:60px;text-align:center;font-size:7.3px;color:#f0f0f0">Hair-2</div>
<div class="abs" style="left:518.8px;top:194.6px;width:7.2px;height:8.8px;background:#f4f4f4;border-radius:1px;color:#9a9a9a;font-size:5.5px;line-height:8.8px;text-align:center">&lt;</div>
<div class="abs" style="left:576.1px;top:194.6px;width:7.2px;height:8.8px;background:#f4f4f4;border-radius:1px;color:#9a9a9a;font-size:5.5px;line-height:8.8px;text-align:center">&gt;</div>
<div class="t" style="left:521px;top:193.8px;width:60px;text-align:center;font-size:7.3px;color:#f0f0f0">Beard-1</div>
<div class="abs" style="left:518.8px;top:216.7px;width:7.2px;height:8.8px;background:#f4f4f4;border-radius:1px;color:#9a9a9a;font-size:5.5px;line-height:8.8px;text-align:center">&lt;</div>
<div class="abs" style="left:576.1px;top:216.7px;width:7.2px;height:8.8px;background:#f4f4f4;border-radius:1px;color:#9a9a9a;font-size:5.5px;line-height:8.8px;text-align:center">&gt;</div>
<div class="t" style="left:521px;top:215.9px;width:60px;text-align:center;font-size:7.3px;color:#f0f0f0">Scarf-5</div>
<div class="abs" style="left:518.8px;top:238.8px;width:7.2px;height:8.8px;background:#f4f4f4;border-radius:1px;color:#9a9a9a;font-size:5.5px;line-height:8.8px;text-align:center">&lt;</div>
<div class="abs" style="left:576.1px;top:238.8px;width:7.2px;height:8.8px;background:#f4f4f4;border-radius:1px;color:#9a9a9a;font-size:5.5px;line-height:8.8px;text-align:center">&gt;</div>
<div class="t" style="left:521px;top:238px;width:60px;text-align:center;font-size:7.3px;color:#f0f0f0">Body-5</div>
<div class="abs" style="left:526px;top:261.8px;width:5px;height:5px;background:#f4f4f4"></div>
<div class="t" style="left:532.2px;top:259.3px;font-size:7.3px;color:#f0f0f0">Randomized</div>
</div>
</div>
<!-- INSPECTOR -->
<div id="insp" class="abs" style="left:768px;top:25px;width:312px;height:549.5px;background:linear-gradient(#848484 12px,#9c9c9c 12px)">
<div class="tab" style="left:1px;top:0;width:75px"></div>
<svg class="abs" style="left:6px;top:2.5px" width="8" height="8" viewBox="0 0 8 8"><circle cx="4" cy="4" r="3.8" fill="#222"/><rect x="3.3" y="3.2" width="1.4" height="3" fill="#ddd"/><rect x="3.3" y="1.4" width="1.4" height="1.2" fill="#ddd"/></svg>
<div class="t" style="left:17.5px;top:0px;font-size:8.8px;color:#111">Inspector</div>
<svg class="abs" style="left:290px;top:2px" width="20" height="10" viewBox="0 0 20 10"><rect x="0.5" y="4.5" width="5" height="4.2" fill="#555"/><path d="M1.6 4.5 V3 A1.4 1.4 0 0 1 4.4 3 V4.5" stroke="#555" stroke-width="0.9" fill="none"/><path d="M8 5.2 L11 5.2 L9.5 7.2 Z" fill="#444"/><path d="M12 4.2 H17.5 M12 6.2 H17.5 M12 8.2 H17.5" stroke="#444" stroke-width="1"/></svg>
<div class="abs" style="left:0;top:12px;width:312px;height:35px;background:linear-gradient(#b6b6b6,#a9a9a9);border-bottom:1px solid #7a7a7a"></div>
<svg class="abs" style="left:3px;top:18px" width="18" height="18" viewBox="0 0 18 18"><path d="M1 3.5 L11 1.5 L16.5 3.5 L16.5 11 L7 14 L1 11.5 Z" fill="#c8c8c8"/><path d="M1 3.5 L11 1.5 L16.5 3.5 L7 6 Z" fill="#e9e9e9"/><path d="M7 6 L16.5 3.5 L16.5 11 L7 14 Z" fill="#adadad"/><path d="M2 13 L7 13 L4.5 16 Z" fill="#333"/></svg>
<div class="abs" style="left:31px;top:18.5px;width:9px;height:9px;background:linear-gradient(#8ea6c6,#6f8bb3);border:1px solid #4d6384;border-radius:1.5px"></div>
<svg class="abs" style="left:31px;top:16.5px" width="11" height="11" viewBox="0 0 11 11"><path d="M2.2 5.8 L4.4 8.6 L9.2 1.6" stroke="#0a0a14" stroke-width="1.7" fill="none"/></svg>
<div class="fld" style="left:44.5px;top:17px;width:215px;height:12.7px;line-height:11px;font-size:9px">Tester</div>
<div class="abs" style="left:263px;top:19px;width:9px;height:9px;background:linear-gradient(#c9c9c9,#b5b5b5);border:1px solid #7d7d7d;border-radius:1.5px"></div>
<div class="t" style="left:275px;top:17.5px;font-size:9px">Static</div>
<div class="abs" style="left:300px;top:21.5px;width:0;height:0;border-top:4px solid #333;border-left:4px solid transparent;border-right:4px solid transparent"></div>
<div class="t" style="left:26px;top:32.5px;font-size:9px">Tag</div>
<div class="dd" style="left:44.5px;top:33px;width:120px">Untagged</div>
<svg class="abs" style="left:158.5px;top:35.5px" width="4" height="7" viewBox="0 0 4 7"><path d="M0.3 2.8 L2 0.6 L3.7 2.8 Z M0.3 4.2 L2 6.4 L3.7 4.2 Z" fill="#222"/></svg>
<div class="t" style="left:170px;top:32.5px;font-size:9px">Layer</div>
<div class="dd" style="left:195.5px;top:33px;width:113px">UI</div>
<svg class="abs" style="left:302px;top:35.5px" width="4" height="7" viewBox="0 0 4 7"><path d="M0.3 2.8 L2 0.6 L3.7 2.8 Z M0.3 4.2 L2 6.4 L3.7 4.2 Z" fill="#222"/></svg>
<div class="tri-d" style="left:3px;top:52.5px"></div>
<svg class="abs" style="left:12px;top:48.5px" width="13" height="13" viewBox="0 0 13 13"><g fill="none" stroke="#b9b9b9" stroke-width="0.9"><circle cx="3" cy="3" r="2"/><circle cx="10" cy="3" r="2"/><circle cx="3" cy="10" r="2"/><circle cx="10" cy="10" r="2"/><path d="M4.5 4.5 L8.5 8.5 M8.5 4.5 L4.5 8.5"/></g></svg>
<div class="t b" style="left:37px;top:49px;font-size:9px">Rect Transform</div>
<svg class="abs" style="left:272.5px;top:49px" width="12" height="11" viewBox="0 0 12 11"><rect x="0.8" y="0.8" width="10" height="9.4" rx="1.2" fill="#46627f" stroke="#30455c" stroke-width="0.8"/><rect x="2.4" y="2" width="7" height="7.2" fill="#7292b1"/><path d="M4.6 3.6 H7.4 M6 3.6 V8" stroke="#dfe8f2" stroke-width="1"/></svg>
<svg class="abs" style="left:288px;top:49px" width="9" height="11" viewBox="0 0 9 11"><path d="M0.5 3 H7 M0.5 7.4 H7.6" stroke="#222" stroke-width="1.1"/><rect x="6.4" y="1.2" width="1.5" height="3.6" fill="#222"/><rect x="4.2" y="5.6" width="1.5" height="3.6" fill="#222"/></svg>
<svg class="abs" style="left:300px;top:49px" width="12" height="11" viewBox="0 0 12 11"><circle cx="5.2" cy="4.6" r="2.1" fill="none" stroke="#222" stroke-width="1.6"/><circle cx="5.2" cy="4.6" r="3.3" fill="none" stroke="#222" stroke-width="1.3" stroke-dasharray="1.3 1.29"/><path d="M9 7.2 L11 7.2 L10 8.8 Z" fill="#222"/></svg>
<div class="t" style="left:19.5px;top:61.5px;font-size:7.6px">center</div>
<div class="t" style="left:6px;top:91px;font-size:7.6px;transform:rotate(-90deg);transform-origin:0 0;width:0;overflow:visible"><span style="position:absolute;left:-11px;top:-6px">middle</span></div>
<div class="abs" style="left:11.5px;top:72.5px;width:36px;height:36.5px;background:#b2b2b2;border:1px solid #7c7c7c"></div>
<svg class="abs" style="left:11.5px;top:72.5px" width="36" height="37" viewBox="0 0 36 37"><rect x="5.5" y="6" width="25" height="25" fill="#b9b9b9" stroke="#8e8e8e" stroke-width="0.8"/><path d="M18 6 V31 M5.5 18.5 H30.5" stroke="#c0564a" stroke-width="0.8"/><rect x="12.5" y="13" width="11" height="11" fill="none" stroke="#333" stroke-width="1.1"/><circle cx="18" cy="18.5" r="1" fill="#b03a2e"/></svg>
<div class="t" style="left:121px;top:61.3px;font-size:9px;color:#0c0c0c">Pos X</div>
<div class="t" style="left:185px;top:61.3px;font-size:9px;color:#0c0c0c">Pos Y</div>
<div class="t" style="left:249px;top:61.3px;font-size:9px;color:#0c0c0c">Pos Z</div>
<div class="fld" style="left:120px;top:73.5px;width:61.5px;height:11.5px;color:#0c0c0c">0</div>
<div class="fld" style="left:184px;top:73.5px;width:61.5px;height:11.5px;color:#0c0c0c">0</div>
<div class="fld" style="left:247.8px;top:73.5px;width:61.8px;height:11.5px;color:#0c0c0c">0</div>
<div class="t" style="left:121px;top:85.3px;font-size:9px;color:#0c0c0c">Width</div>
<div class="t" style="left:185px;top:85.3px;font-size:9px;color:#0c0c0c">Height</div>
<div class="fld" style="left:120px;top:97.7px;width:61.5px;height:11.5px;color:#0c0c0c">160</div>
<div class="fld" style="left:184px;top:97.7px;width:61.5px;height:11.5px;color:#0c0c0c">30</div>
<div class="btn" style="left:270.3px;top:96px;width:39.5px;height:13.5px;border-color:#666"></div><div class="sep" style="left:290.5px;top:96px;height:13.5px;background:#666"></div>
<div class="abs" style="left:276px;top:99px;width:9px;height:8px;border:1px dotted #333"></div>
<div class="t" style="left:296.5px;top:97px;font-size:8.5px;color:#333">R</div>
<div class="tri-r" style="left:3px;top:113.5px"></div>
<div class="t" style="left:11.5px;top:111px;font-size:9px;color:#0c0c0c">Anchors</div>
<div class="t" style="left:11.5px;top:124.5px;font-size:9px;color:#0c0c0c">Pivot</div>
<div class="t" style="left:121px;top:124.5px;font-size:9px;color:#0c0c0c">X</div>
<div class="fld" style="left:129.5px;top:125px;width:52px;height:11.5px;color:#0c0c0c">0.5</div>
<div class="t" style="left:185.5px;top:124.5px;font-size:9px;color:#0c0c0c">Y</div>
<div class="fld" style="left:193.5px;top:125px;width:52px;height:11.5px;color:#0c0c0c">0.5</div>
<div class="t" style="left:11.5px;top:144px;font-size:9px;color:#0c0c0c">Rotation</div>
<div class="t" style="left:121px;top:144px;font-size:9px;color:#0c0c0c">X</div>
<div class="fld" style="left:129.5px;top:144.4px;width:52px;height:11.5px;color:#0c0c0c">0</div>
<div class="t" style="left:185.5px;top:144px;font-size:9px;color:#0c0c0c">Y</div>
<div class="fld" style="left:193.5px;top:144.4px;width:52px;height:11.5px;color:#0c0c0c">0</div>
<div class="t" style="left:249.8px;top:144px;font-size:9px;color:#0c0c0c">Z</div>
<div class="fld" style="left:257.6px;top:144.4px;width:52px;height:11.5px;color:#0c0c0c">0</div>
<div class="t" style="left:11.5px;top:157.8px;font-size:9px;color:#0c0c0c">Scale</div>
<div class="t" style="left:121px;top:157.8px;font-size:9px;color:#0c0c0c">X</div>
<div class="fld" style="left:129.5px;top:158.2px;width:52px;height:11.5px;color:#0c0c0c">1</div>
<div class="t" style="left:185.5px;top:157.8px;font-size:9px;color:#0c0c0c">Y</div>
<div class="fld" style="left:193.5px;top:158.2px;width:52px;height:11.5px;color:#0c0c0c">1</div>
<div class="t" style="left:249.8px;top:157.8px;font-size:9px;color:#0c0c0c">Z</div>
<div class="fld" style="left:257.6px;top:158.2px;width:52px;height:11.5px;color:#0c0c0c">1</div>
<div class="abs" style="left:0;top:173px;width:312px;height:1px;background:#7f7f7f"></div>
<div class="tri-d" style="left:3px;top:179px"></div>
<svg class="abs" style="left:13px;top:175.5px" width="10" height="11" viewBox="0 0 10 11"><path d="M1 0.5 H6.5 L9 3 V10.5 H1 Z" fill="#c9c9c9" stroke="#aaa" stroke-width="0.6"/><text x="2" y="8.6" font-size="4.6" font-family="Liberation Sans" fill="#4b78a8">C#</text></svg>
<div class="abs" style="left:25.7px;top:176.5px;width:9px;height:9px;background:linear-gradient(#8ea6c6,#6f8bb3);border:1px solid #4d6384;border-radius:1.5px"></div>
<svg class="abs" style="left:25.7px;top:174.5px" width="11" height="11" viewBox="0 0 11 11"><path d="M2.2 5.8 L4.4 8.6 L9.2 1.6" stroke="#0a0a14" stroke-width="1.7" fill="none"/></svg>
<div class="t b" style="left:36.7px;top:175px;font-size:9px">Portrait Random Mgr (Script)</div>
<svg class="abs" style="left:272.5px;top:175px" width="12" height="11" viewBox="0 0 12 11"><rect x="0.8" y="0.8" width="10" height="9.4" rx="1.2" fill="#46627f" stroke="#30455c" stroke-width="0.8"/><rect x="2.4" y="2" width="7" height="7.2" fill="#7292b1"/><path d="M4.6 3.6 H7.4 M6 3.6 V8" stroke="#dfe8f2" stroke-width="1"/></svg>
<svg class="abs" style="left:288px;top:175px" width="9" height="11" viewBox="0 0 9 11"><path d="M0.5 3 H7 M0.5 7.4 H7.6" stroke="#222" stroke-width="1.1"/><rect x="6.4" y="1.2" width="1.5" height="3.6" fill="#222"/><rect x="4.2" y="5.6" width="1.5" height="3.6" fill="#222"/></svg>
<svg class="abs" style="left:300px;top:175px" width="12" height="11" viewBox="0 0 12 11"><circle cx="5.2" cy="4.6" r="2.1" fill="none" stroke="#222" stroke-width="1.6"/><circle cx="5.2" cy="4.6" r="3.3" fill="none" stroke="#222" stroke-width="1.3" stroke-dasharray="1.3 1.29"/><path d="M9 7.2 L11 7.2 L10 8.8 Z" fill="#222"/></svg>
<div class="t" style="left:10.8px;top:187.5px;font-size:9px;color:#6e6e6e">Script</div>
<div class="fld" style="left:120.3px;top:188px;width:175.5px;height:11px;color:#777;background:#a9a9a9;border-color:#939393;padding-left:11px">PortraitRandomMgr</div>
<svg class="abs" style="left:123px;top:189.5px" width="8" height="8" viewBox="0 0 8 8"><path d="M1 0.5 H5 L7 2.5 V7.5 H1 Z" fill="#b9b9b9" stroke="#a2a2a2" stroke-width="0.5"/></svg>
<svg class="abs" style="left:300.5px;top:189.5px" width="8" height="8" viewBox="0 0 8 8"><circle cx="4" cy="4" r="2.8" fill="none" stroke="#7a7a7a" stroke-width="0.9"/><circle cx="4" cy="4" r="0.9" fill="#7a7a7a"/></svg>
<div class="tri-r" style="left:3px;top:209.5px"></div>
<div class="t" style="left:11.5px;top:207px;font-size:9px;color:#0c0c0c">List Body</div>
<div class="tri-r" style="left:3px;top:223px"></div>
<div class="t" style="left:11.5px;top:220.5px;font-size:9px;color:#0c0c0c">List Generate Order</div>
<div class="t" style="left:11.5px;top:234px;font-size:9px;color:#0c0c0c">Randomized Interval</div>
<div class="abs" style="left:121px;top:239px;width:147px;height:2px;background:#777;border-radius:1px"></div>
<div class="abs" style="left:120.3px;top:236.8px;width:7px;height:7px;border-radius:50%;background:linear-gradient(#e6e6e6,#bdbdbd);border:1px solid #666"></div>
<div class="fld" style="left:271.6px;top:234.7px;width:38px;height:11px;color:#0c0c0c">0.1</div>
<div class="t" style="left:11.5px;top:247.8px;font-size:9px;color:#0c0c0c">Color Body</div>
<div class="abs" style="left:120.3px;top:248.5px;width:175.5px;height:11px;background:#4f52a6;border:1px solid #5a5a5a;border-bottom:2.4px solid #f0f0f0;box-shadow:0 0.5px 0 #666"></div>
<div class="t" style="left:11.5px;top:261.3px;font-size:9px;color:#0c0c0c">Color Horse</div>
<div class="abs" style="left:120.3px;top:262.3px;width:175.5px;height:11px;background:#7a4b2c;border:1px solid #5a5a5a;border-bottom:2.4px solid #f0f0f0;box-shadow:0 0.5px 0 #666"></div>
<svg class="abs" style="left:299px;top:248px" width="11" height="12" viewBox="0 0 11 12"><path d="M1 11 L1.6 8.6 L6.6 3.6 L8 5 L3 10 Z" fill="#ddd" stroke="#222" stroke-width="0.7"/><path d="M6 2.6 L9 5.6 M7 3 L9 1 Q10.4 0.2 10.6 1.6 L8.8 4" stroke="#222" stroke-width="1.2" fill="#222"/></svg>
<svg class="abs" style="left:299px;top:261.8px" width="11" height="12" viewBox="0 0 11 12"><path d="M1 11 L1.6 8.6 L6.6 3.6 L8 5 L3 10 Z" fill="#ddd" stroke="#222" stroke-width="0.7"/><path d="M6 2.6 L9 5.6 M7 3 L9 1 Q10.4 0.2 10.6 1.6 L8.8 4" stroke="#222" stroke-width="1.2" fill="#222"/></svg>
<div class="abs" style="left:0;top:281px;width:312px;height:1px;background:#7f7f7f"></div>
<div class="btn" style="left:67.8px;top:288.4px;width:174px;height:16px;border-color:#666;text-align:center;font-size:10px;line-height:14px;color:#111">Add Component</div>
</div>
<!-- CONSOLE -->
<div id="cons" class="abs" style="left:0;top:466px;width:765px;height:108.5px;background:#848484"><div class="abs" style="left:0;top:3px;width:765px;height:105px">
<div class="tab" style="left:58px;top:0.5px;width:70px;height:12.5px"></div>
<svg class="abs" style="left:-3px;top:3px" width="9" height="8" viewBox="0 0 9 8"><path d="M0.5 1 H3.5 L4.5 2 H8.5 V7.5 H0.5 Z" fill="none" stroke="#333" stroke-width="0.9"/></svg>
<div class="t" style="left:8px;top:1px;font-size:8.8px;color:#2a2a2a">Project</div>
<svg class="abs" style="left:65px;top:2px" width="8" height="10" viewBox="0 0 8 10"><rect x="0.8" y="0.8" width="6" height="8" rx="1" fill="none" stroke="#333" stroke-width="0.9"/><path d="M2.4 3.2 H5.2 M2.4 5 H5.2" stroke="#333" stroke-width="0.7"/></svg>
<div class="t" style="left:75.5px;top:1px;font-size:8.8px;color:#111">Console</div>
<svg class="abs" style="left:752px;top:5px" width="12" height="6" viewBox="0 0 12 6"><path d="M0 1 L3 1 L1.5 3 Z" fill="#555"/><path d="M4.5 0.6 H10 M4.5 2.6 H10 M4.5 4.6 H10" stroke="#555" stroke-width="1"/></svg>
<div class="tbar" style="left:0;top:13px;width:765px;height:13px"></div>
<div class="abs" style="left:24.5px;top:13px;width:35.5px;height:12px;background:linear-gradient(#efefef,#dcdcdc)"></div>
<div class="t" style="left:-1.5px;top:14px;font-size:7.4px">Clear</div>
<div class="sep" style="left:21.5px;top:13px;height:12px"></div>
<div class="t" style="left:28px;top:14px;font-size:7.4px">Collapse</div>
<div class="sep" style="left:60px;top:13px;height:12px"></div>
<div class="t" style="left:63.5px;top:14px;font-size:7.4px">Clear on Play</div>
<div class="sep" style="left:110px;top:13px;height:12px"></div>
<div class="t" style="left:113.5px;top:14px;font-size:7.4px">Error Pause</div>
<div class="sep" style="left:154px;top:13px;height:12px"></div>
<div class="t" style="left:158.5px;top:14px;font-size:7.4px">Editor</div>
<div class="sep" style="left:188px;top:13px;height:12px"></div>
<div class="abs" style="left:181.5px;top:18px;width:0;height:0;border-top:2.5px solid #444;border-left:2px solid transparent;border-right:2px solid transparent"></div>
<div class="abs" style="left:684.5px;top:13px;width:77px;height:12px;background:linear-gradient(#e6e6e6,#cfcfcf)"></div>
<div class="sep" style="left:684.5px;top:13px;height:12px"></div>
<div class="sep" style="left:708px;top:13px;height:12px"></div>
<div class="sep" style="left:735.5px;top:13px;height:12px"></div>
<div class="sep" style="left:761px;top:13px;height:12px"></div>
<svg class="abs" style="left:688px;top:14px" width="10" height="10" viewBox="0 0 10 10"><circle cx="5" cy="4.8" r="4.1" fill="#ececec" stroke="#777" stroke-width="0.8"/><path d="M5 2.2 V5.6 M5 6.6 V7.6" stroke="#555" stroke-width="1"/></svg>
<div class="t" style="left:700.5px;top:14px;font-size:7.4px">1</div>
<svg class="abs" style="left:711px;top:14px" width="11" height="10" viewBox="0 0 11 10"><path d="M5.5 0.8 L10.4 9.3 L0.6 9.3 Z" fill="#f1c232" stroke="#a88410" stroke-width="0.7"/><path d="M5.5 3.6 V6.6 M5.5 7.4 V8.3" stroke="#7a5a00" stroke-width="0.9"/></svg>
<div class="t" style="left:724px;top:14px;font-size:7.4px">57</div>
<svg class="abs" style="left:739.5px;top:14px" width="10" height="10" viewBox="0 0 10 10"><circle cx="5" cy="5" r="4.4" fill="#4a4a4a"/><path d="M5 2.2 V5.8 M5 6.8 V7.9" stroke="#cfcfcf" stroke-width="1.3"/></svg>
<div class="t" style="left:752px;top:14px;font-size:7.4px">0</div>
<div class="abs" style="left:0;top:26px;width:765px;height:57px;background:#b4b4b4;border-bottom:1.2px solid #5e5e5e"></div>
<div class="abs" style="left:0;top:84px;width:765px;height:21.5px;background:#b0b0b0"></div>
<svg class="abs" style="left:-3px;top:31.5px" width="13" height="14" viewBox="0 0 13 14"><path d="M6.5 1 A5.4 5.4 0 1 1 4 11.2 L1.6 12.6 L2.6 10 A5.4 5.4 0 0 1 6.5 1 Z" fill="#ededed" stroke="#666" stroke-width="0.8"/><path d="M6.5 3.4 V7.4 M6.5 8.6 V9.8" stroke="#555" stroke-width="1.2"/></svg>
<div class="t" style="left:15.3px;top:27.5px;font-size:8.85px">Default GameObject BitMask: PostProcessing already registered</div>
<div class="abs" style="left:744.5px;top:30.5px;width:15px;height:14px;border-radius:7px;background:linear-gradient(#d4d4d4,#bdbdbd);border:1px solid #b0b0b0;text-align:center;font-size:8px;line-height:12px">1</div>
</div></div>
</div>
</body></html>
